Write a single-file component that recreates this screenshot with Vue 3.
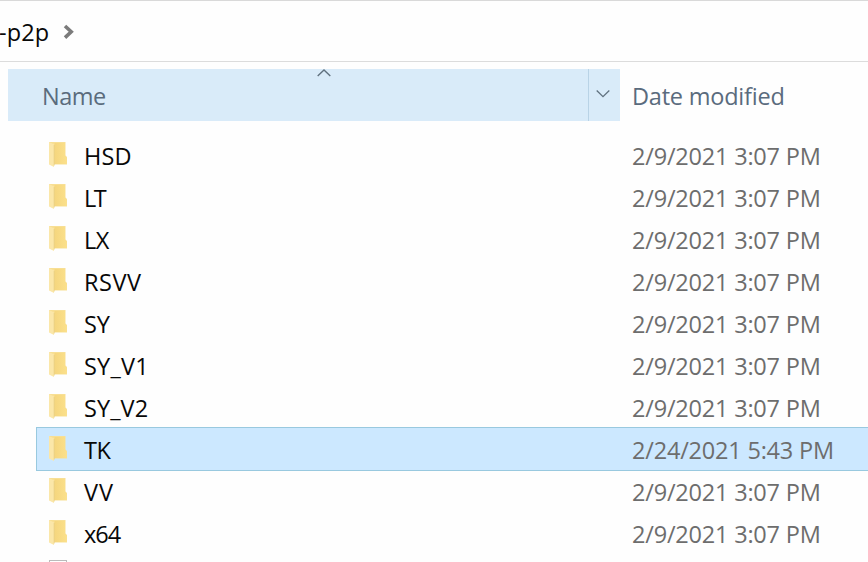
<script setup>
const tracking = { LT: -2.6, LX: -0.6, VV: 1, x64: -1, TK: -0.4, RSVV: 0.5, SY_V1: 0.2, SY: -0.2 }
const names = ['HSD', 'LT', 'LX', 'RSVV', 'SY', 'SY_V1', 'SY_V2', 'TK', 'VV', 'x64']
const rows = names.map((name) => ({
  name,
  tracking: tracking[name] ?? 0.1,
  selected: name === 'TK',
  date: name === 'TK' ? '2/24/2021 5:43 PM' : '2/9/2021 3:07 PM',
}))
</script>

<template>
  <div class="explorer">
    <nav class="address">
      <span class="crumb">-p2p</span>
      <svg class="crumb-arrow" width="12" height="16" viewBox="0 0 12 16">
        <path d="M2 2L8.2 7.8L2 13.6" fill="none" stroke="#7b7b7b" stroke-width="3.6" />
      </svg>
    </nav>
    <header class="columns">
      <div class="name-column">
        <span>Name</span>
        <svg class="sort" width="16" height="10" viewBox="0 0 16 10">
          <path d="M1.7 8L8 2L14.3 8" fill="none" stroke="#60717f" stroke-width="1.4" />
        </svg>
      </div>
      <div class="filter">
        <svg width="16" height="10" viewBox="0 0 16 10">
          <path d="M1.7 1.5L8 7.7L14.3 1.5" fill="none" stroke="#60717f" stroke-width="1.3" />
        </svg>
      </div>
      <div class="date-column">Date modified</div>
    </header>
    <main class="list">
      <div v-for="row in rows" :key="row.name" class="row" :class="{ selected: row.selected }">
        <svg class="folder" width="20" height="27" viewBox="0 0 20 27">
          <defs>
            <linearGradient id="folder-face" x2="1" y2="0">
              <stop offset="0" stop-color="#f5d67e" />
              <stop offset="1" stop-color="#fbe08b" />
            </linearGradient>
          </defs>
          <path d="M1 1H17.5V14.5L19 16V23.5H6L1 22Z" fill="#f8df94" />
          <path d="M6.5 2H17V14.5L18.7 16.5V23H6.5Z" fill="url(#folder-face)" />
          <path d="M1 1L6 3.5V26L1 23.5Z" fill="#fbe7a9" />
          <path d="M6.2 4V24.5" stroke="#e9cd7c" stroke-width=".8" />
        </svg>
        <span class="name" :style="{ letterSpacing: row.tracking + 'px' }">{{ row.name }}</span>
        <span class="date">{{ row.date }}</span>
      </div>
      <div class="next-row"><div class="file"></div></div>
    </main>
  </div>
</template>

<style>
body {
  background: #fefefe;
  overflow: hidden;
}
</style>

<style scoped>
.explorer {
  box-sizing: border-box;
  height: 562px;
  overflow: hidden;
  border-top: 1px solid #d9d9d9;
  font: 23.5px/32px "Open Sans", "Noto Sans", sans-serif;
  color: #080808;
}
.address {
  box-sizing: border-box;
  height: 61px;
  display: flex;
  align-items: center;
  padding-top: 2px;
  border-bottom: 1px solid #dcdcdc;
}
.crumb {
  width: 50px;
  margin-left: -1px;
  white-space: nowrap;
  letter-spacing: .1px;
}
.crumb-arrow {
  margin-left: 14px;
}
.columns {
  height: 52px;
  margin: 7px 0 0 8px;
  display: flex;
  color: #5a6b7d;
  letter-spacing: -.22px;
}
.name-column {
  position: relative;
  box-sizing: border-box;
  width: 580px;
  padding: 11px 0 0 34px;
  letter-spacing: -.5px;
  background: #d9ebf9;
}
.sort {
  position: absolute;
  left: 308px;
  top: -1px;
}
.filter {
  box-sizing: border-box;
  width: 32px;
  display: flex;
  align-items: center;
  justify-content: center;
  padding: 0 4px 2px 0;
  border-left: 1px solid #b9d3e6;
  background: #d9ebf9;
}
.date-column {
  padding: 11px 0 0 12px;
}
.list {
  padding: 14px 0 0 36px;
}
.row {
  box-sizing: border-box;
  height: 42px;
  display: flex;
  align-items: center;
  padding-left: 12px;
}
.row.selected {
  height: 44px;
  margin: -2px 0 0;
  border: 1px solid #99c9df;
  border-right: 0;
  padding: 1px 0 0 11px;
  background: #cce8ff;
}
.folder {
  margin-top: -3px;
}
.name {
  box-sizing: border-box;
  width: 564px;
  padding-left: 16px;
}
.date {
  color: #6d6d6d;
  white-space: nowrap;
  letter-spacing: -.2px;
}
.next-row {
  padding: 5px 0 0 13px;
}
.file {
  width: 16px;
  height: 20px;
  border: 1px solid #bbb;
  background: #fff;
}
</style>
